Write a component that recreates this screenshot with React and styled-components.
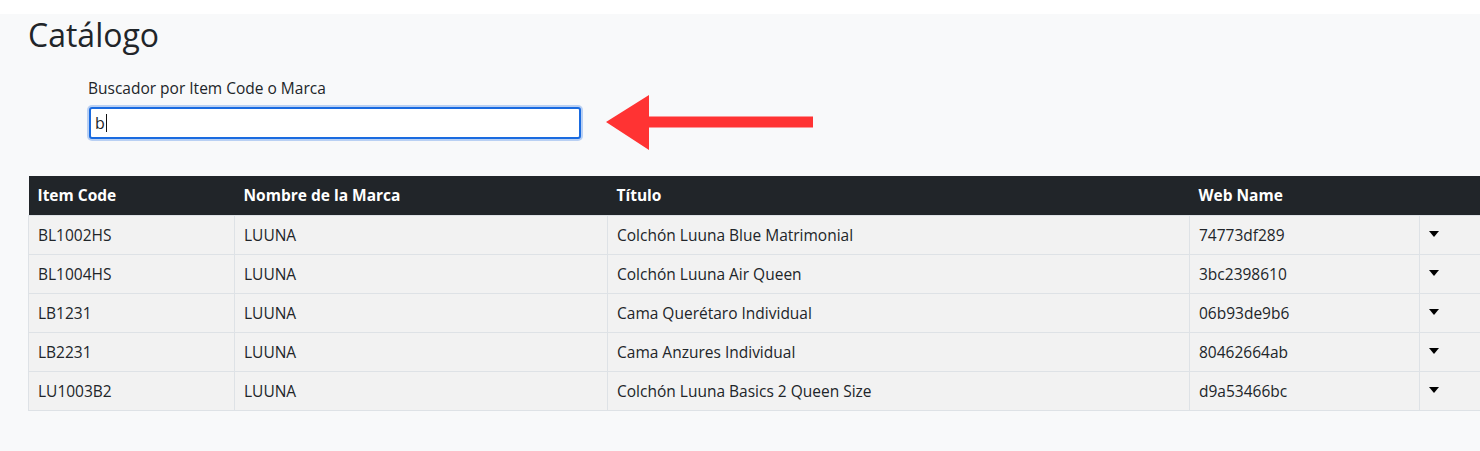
import React from 'react';
import styled, { createGlobalStyle } from 'styled-components';

const GlobalStyle = createGlobalStyle`
    html, body {
        margin: 0;
        padding: 0;
        background: #ffffff;
        overflow: hidden;
    }

    body {
        font-family: "Open Sans", "Noto Sans", sans-serif;
        color: #212529;
    }
`;

const rows = [
    { code: 'BL1002HS', brand: 'LUUNA', title: 'Colchón Luuna Blue Matrimonial', web: '74773df289' },
    { code: 'BL1004HS', brand: 'LUUNA', title: 'Colchón Luuna Air Queen', web: '3bc2398610' },
    { code: 'LB1231', brand: 'LUUNA', title: 'Cama Querétaro Individual', web: '06b93de9b6' },
    { code: 'LB2231', brand: 'LUUNA', title: 'Cama Anzures Individual', web: '80462664ab' },
    { code: 'LU1003B2', brand: 'LUUNA', title: 'Colchón Luuna Basics 2 Queen Size', web: 'd9a53466bc' },
];

const columns = [
    { key: 'code', label: 'Item Code', width: 206 },
    { key: 'brand', label: 'Nombre de la Marca', width: 373 },
    { key: 'title', label: 'Título', width: 582 },
    { key: 'web', label: 'Web Name', width: 230 },
];

const Catalog = () => (
    <Page>
        <GlobalStyle />
        <Title>Catálogo</Title>

        <SearchBlock>
            <Label htmlFor="buscador">Buscador por Item Code o Marca</Label>
            <SearchRow>
                <InputBox>
                    <InputText>b</InputText>
                    <Caret />
                </InputBox>
                <Arrow width="210" height="56" viewBox="0 0 210 56">
                    <polygon points="0,27 43,0 43,21.5 207,21.5 207,32.5 43,32.5 43,55" fill="#ff3333" />
                </Arrow>
            </SearchRow>
        </SearchBlock>

        <Table>
            <colgroup>
                {columns.map(col => (
                    <col key={col.key} style={{ width: col.width }} />
                ))}
                <col />
            </colgroup>
            <thead>
                <tr>
                    {columns.map(col => (
                        <Th key={col.key}>{col.label}</Th>
                    ))}
                    <Th />
                </tr>
            </thead>
            <tbody>
                {rows.map(row => (
                    <tr key={row.code}>
                        {columns.map(col => (
                            <Td key={col.key}>{row[col.key]}</Td>
                        ))}
                        <Td>
                            <Toggle />
                        </Td>
                    </tr>
                ))}
            </tbody>
        </Table>
    </Page>
);

const Page = styled.div`
    margin-top: 14px;
    min-height: 437px;
    background: #f8f9fa;
    padding: 0 0 0 28px;
    box-sizing: border-box;
    display: flex;
    flex-direction: column;
`;

const Title = styled.h1`
    margin: 0;
    padding-top: 2px;
    font-size: 32px;
    font-weight: 400;
    line-height: 38px;
    color: #212529;
`;

const SearchBlock = styled.div`
    display: flex;
    flex-direction: column;
    padding-left: 60px;
    margin-top: 24px;
`;

const Label = styled.label`
    font-size: 15.5px;
    line-height: 20px;
    color: #212529;
    margin-bottom: 9px;
`;

const SearchRow = styled.div`
    display: flex;
    align-items: center;
    gap: 25px;
    height: 32px;
`;

const InputBox = styled.div`
    width: 492px;
    height: 32px;
    box-sizing: border-box;
    background: #ffffff;
    border: 2px solid #1a6be0;
    border-radius: 3px;
    box-shadow: 0 0 0 2px #b9d0f3;
    display: flex;
    align-items: center;
    padding-left: 4px;
    margin-left: 1px;
`;

const InputText = styled.span`
    font-size: 16px;
    color: #212529;
`;

const Caret = styled.span`
    display: inline-block;
    width: 1px;
    height: 18px;
    background: #111;
    margin-left: 1px;
`;

const Arrow = styled.svg`
    display: block;
    margin: -12px 0;
`;

const Table = styled.table`
    margin-top: 37px;
    width: 1470px;
    border-collapse: collapse;
    table-layout: fixed;
    font-size: 15.5px;
`;

const Th = styled.th`
    background: #212529;
    color: #ffffff;
    text-align: left;
    font-weight: 700;
    height: 39px;
    padding: 0 9px;
    box-sizing: border-box;
    border: none;
`;

const Td = styled.td`
    background: #f2f2f2;
    color: #212529;
    height: 39px;
    padding: 0 9px;
    box-sizing: border-box;
    border: 1px solid #dee2e6;
    white-space: nowrap;
`;

const Toggle = styled.span`
    display: inline-block;
    width: 0;
    height: 0;
    border-left: 5px solid transparent;
    border-right: 5px solid transparent;
    border-top: 6px solid #000;
    vertical-align: middle;
    position: relative;
    top: -2px;
`;

export default Catalog;
